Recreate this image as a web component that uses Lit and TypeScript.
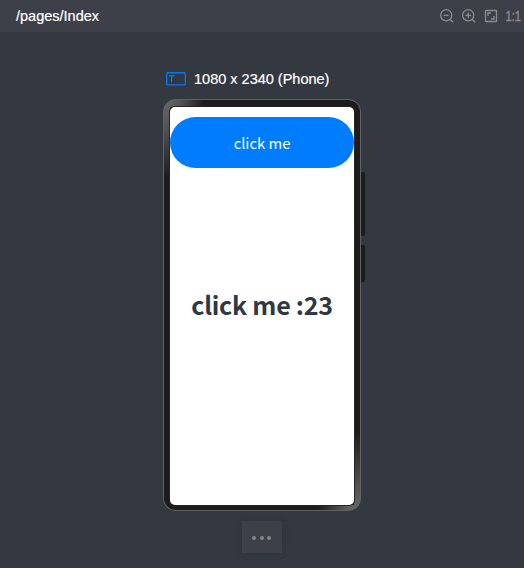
import { LitElement, html, css } from "lit";
import { customElement, property, state } from "lit/decorators.js";

@customElement("preview-toolbar")
class PreviewToolbar extends LitElement {
  @property() path = "";

  static styles = css`
    :host {
      display: flex;
      align-items: center;
      justify-content: space-between;
      box-sizing: border-box;
      height: 32px;
      padding: 0 3px 0 16px;
      background: #3d4049;
      color: #fff;
      font: 14.5px/32px "Liberation Sans", Arial, sans-serif;
    }
    .path {
      -webkit-text-stroke: 0.2px #fff;
    }
    .tools {
      display: flex;
      align-items: center;
      gap: 6px;
      color: #8b8c8f;
    }
    svg {
      display: block;
      overflow: visible;
      width: 16px;
      height: 16px;
      fill: none;
      stroke: currentColor;
      stroke-width: 1.3;
    }
    .ratio {
      fill: currentColor;
      stroke: currentColor;
      stroke-width: 0.4;
      font: 15px/16px "Liberation Sans", Arial, sans-serif;
    }
  `;

  render() {
    return html`
      <span class="path">${this.path}</span>
      <div class="tools">
        <svg viewBox="0 0 16 16"><circle cx="7.2" cy="7.3" r="5.6" /><path d="M4.7 7.3h5M11.2 11.2l3 3" /></svg>
        <svg viewBox="0 0 16 16"><circle cx="7.2" cy="7.3" r="5.6" /><path d="M4.4 7.3h5.6M7.2 4.5v5.6M11.2 11.2l3 3" /></svg>
        <svg viewBox="0 0 16 16"><rect x="2.5" y="2.5" width="11" height="11" rx=".6" /><path d="M5 8V5H8M8 11h3V8" /></svg>
        <svg viewBox="0 0 16 16"><text class="ratio" x=".5" y="13.3" textLength="15.5" lengthAdjust="spacingAndGlyphs">1:1</text></svg>
      </div>
    `;
  }
}

@customElement("phone-frame")
class PhoneFrame extends LitElement {
  @state() count = 23;

  static styles = css`
    :host {
      display: block;
      position: relative;
      box-sizing: border-box;
      width: 198px;
      height: 412px;
      padding: 1px;
      border-radius: 13px;
      background: #626262;
    }
    .bezel {
      box-sizing: border-box;
      width: 196px;
      height: 410px;
      padding: 7px 6px 5px;
      border-radius: 12px;
      background:
        linear-gradient(90deg, #666 0, #555 16px, transparent 40px) 0 0 / 100% 7px no-repeat,
        linear-gradient(180deg, #666 0, #555 26px, #1c1c1c 78px) 0 0 / 6px 80px no-repeat,
        linear-gradient(270deg, #666 0, #606060 12px, transparent 42px) 0 100% / 100% 5px no-repeat,
        linear-gradient(0deg, #666 0, #505050 26px, #1c1c1c 78px) 100% 100% / 6px 80px no-repeat,
        #1c1c1c;
    }
    .screen {
      display: flex;
      flex-direction: column;
      box-sizing: border-box;
      width: 184px;
      height: 398px;
      padding-top: 10px;
      border-radius: 5px;
      background: #fff;
      box-shadow: 0 0 0 1px #242424;
      font-family: "Noto Sans CJK SC", "Noto Sans", sans-serif;
    }
    button {
      width: 184px;
      height: 51px;
      padding: 0 0 1px;
      border: 0;
      border-radius: 26px;
      background: #007dff;
      color: #fff;
      font: 14.8px/49px "Noto Sans CJK SC", "Noto Sans", sans-serif;
    }
    .message {
      margin-top: 116px;
      color: #2f3843;
      font-size: 25px;
      font-weight: 700;
      line-height: 40px;
      letter-spacing: -0.25px;
      text-align: center;
      white-space: nowrap;
    }
    .key {
      position: absolute;
      left: 198px;
      width: 4px;
      border-radius: 0 2px 2px 0;
      background: #1c1c1c;
    }
    .volume {
      top: 73px;
      height: 64px;
    }
    .power {
      top: 146px;
      height: 37px;
    }
  `;

  render() {
    return html`
      <div class="bezel">
        <div class="screen">
          <button @click=${() => this.count++}>click me</button>
          <div class="message">click me :${this.count}</div>
        </div>
      </div>
      <i class="key volume"></i>
      <i class="key power"></i>
    `;
  }
}

@customElement("app-root")
class AppRoot extends LitElement {
  static styles = css`
    :host {
      display: block;
      height: 568px;
      overflow: hidden;
      background: #343840;
    }
    main {
      display: flex;
      flex-direction: column;
      align-items: center;
      padding-top: 37px;
    }
    .device {
      display: flex;
      align-items: center;
      gap: 8px;
      box-sizing: border-box;
      width: 198px;
      height: 20px;
      margin-bottom: 10px;
      padding-left: 3px;
      color: #fff;
      font: 14.5px/20px "Liberation Sans", Arial, sans-serif;
      white-space: nowrap;
      -webkit-text-stroke: 0.2px #fff;
    }
    .device svg {
      flex: none;
      width: 20px;
      height: 14px;
      fill: none;
      stroke: #0875ee;
    }
    .more {
      display: flex;
      align-items: center;
      justify-content: center;
      gap: 3.5px;
      box-sizing: border-box;
      width: 40px;
      height: 32px;
      margin-top: 10px;
      padding: 1px 1px 0 0;
      background: #3d4049;
      box-shadow: 0 0 8px rgba(0, 0, 0, 0.12);
    }
    .more i {
      width: 4px;
      height: 4px;
      border-radius: 50%;
      background: #858688;
    }
  `;

  render() {
    return html`
      <preview-toolbar path="/pages/Index"></preview-toolbar>
      <main>
        <div class="device">
          <svg viewBox="0 0 20 14">
            <rect x=".7" y=".7" width="18.6" height="12.2" rx="1" stroke-width="1.4" />
            <path d="M3 3.7h5.5M5.7 3.7v6.5" stroke-width="1.4" />
          </svg>
          <span>1080 x 2340 (Phone)</span>
        </div>
        <phone-frame></phone-frame>
        <div class="more"><i></i><i></i><i></i></div>
      </main>
    `;
  }
}
